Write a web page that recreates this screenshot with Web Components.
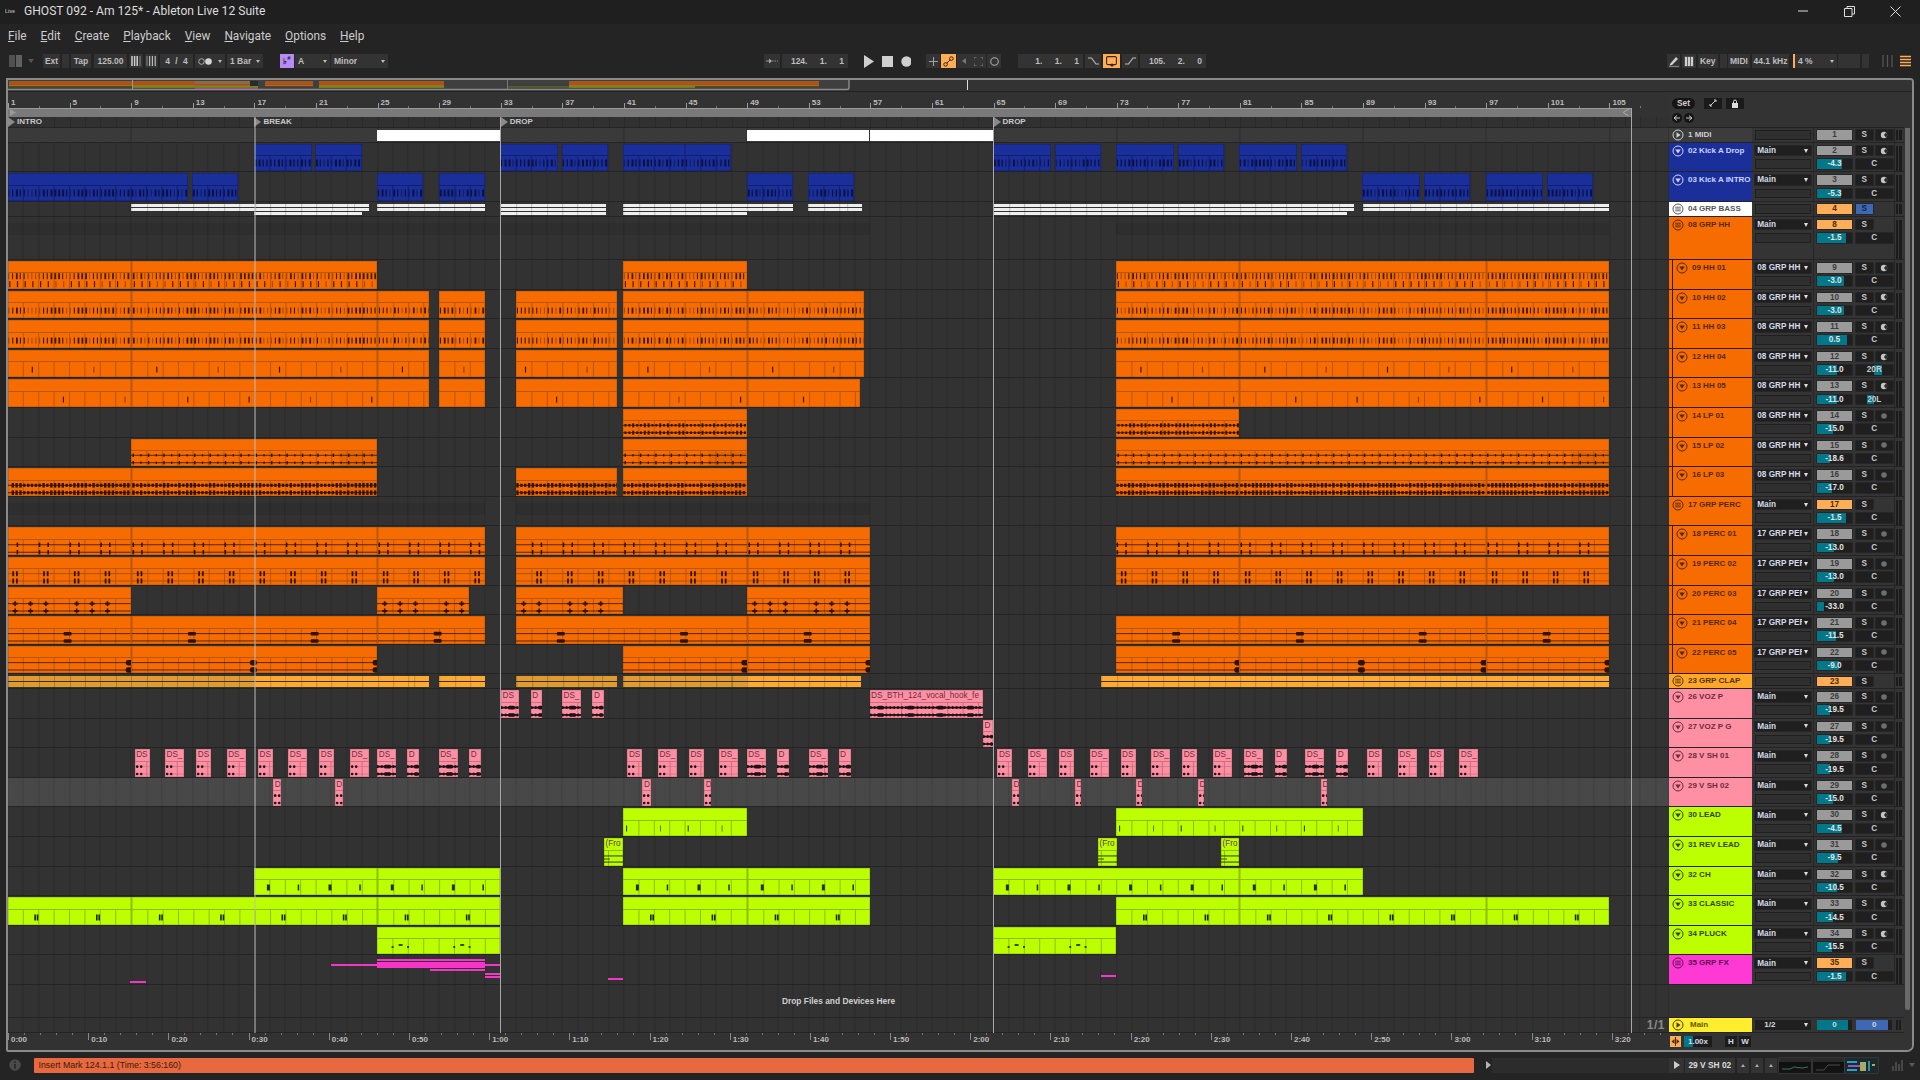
<!DOCTYPE html>
<html lang="en"><head><meta charset="utf-8"><title>Ableton Live</title>
<style>
html,body{margin:0;padding:0;background:#242424;overflow:hidden;width:1920px;height:1080px}
body{font-family:"Liberation Sans",Arial,sans-serif}
</style></head><body><live-app></live-app>
<script>
const BW=15.4, OFF=.6, b2x=b=>Math.max(0,(b-1)*BW-OFF);
const KC={b:{c:'#1b2f9a',g:'#121f70',t:'#0a1040'},o:{c:'#f76c00',g:'#b8560c',t:'#2e1400'},p:{c:'#ff8fa3',g:'#c9707f',t:'#1c1114'},l:{c:'#bcff00',g:'#8cbf00',t:'#1a2400'}};
const HC={b:['#1b2f9a','#ccd4ff'],o:['#f76c00','#52290a'],p:['#ff8fa3','#6b2c3c'],l:['#bcff00','#33440a'],w:['#ffffff','#555'],m:['#ff39d4','#5a1050'],c:['#ffa726','#53320a'],y:['#ffed2e','#6a5600'],n:['#3c3c3c','#cfcfcf']};
const R=(x,y,w,h,f,o=1,rx=0)=>`<rect x="${x.toFixed(1)}" y="${(y-h/2).toFixed(1)}" width="${w}" height="${h}" fill="${f}"${o<1?` opacity="${o}"`:''}${rx?` rx="${rx}"`:''}/>`;
const hash=n=>{const s=Math.sin(n*127.1+3.7)*43758.5;return s-Math.floor(s)};
function per(p,offs,x0,x1,cb){for(let k=Math.floor(x0/BW/p)-1;k*p*BW<x1+BW;k++)offs.forEach((o,i)=>{const x=(k*p+o)*BW-OFF;if(x>=x0&&x<x1-.5)cb(x-x0,k,i)});}
const PAT={
 kick:(a,b,t)=>{let s='';per(.25,[.05],a,b,(x,k)=>{const d=hash(k);s+=R(x,7,d>.6?2:1.3,7,t,d<.2?.55:.95)});return s},
 hh1:(a,b,t)=>{let s='';per(.25,[.05],a,b,(x,k)=>{const d=hash(k);s+=R(x,3.2,d>.7?1.8:1.1,6,t,d<.3?.4:.9)});per(.5,[.12],a,b,(x,k)=>{const d=hash(k+9);s+=R(x,11.2,1.2,6,t,d<.35?.4:.9)});return s},
 hh2:(a,b,t)=>{let s='';per(.25,[.06],a,b,(x,k)=>{const d=hash(k);s+=R(x,7.6,d>.75?1.8:1.1,6,t,d<.3?.38:.95)});return s},
 hh4:(a,b,t)=>{let s='';per(4,[1.58],a,b,(x,k)=>{s+=R(x,7.6,1.2,6,t,k%2?.5:.95)});return s},
 hh5:(a,b,t)=>{let s='';per(4,[3.6],a,b,(x,k)=>{s+=R(x,7.6,1.2,6,t,k%3==1?.5:.9)});return s},
 lp1:(a,b,t)=>{let s=R(0,4.3,b-a,.9,t,.9)+R(0,11.7,b-a,.9,t,.9);per(.25,[.1],a,b,(x,k)=>{const d=hash(k);s+=R(x,4.3,2,d>.5?4:2.6,t)+R(x,11.7,2,d>.5?4:2.6,t)});return s},
 lp2:(a,b,t)=>{let s=R(0,4.3,b-a,.9,t,.9)+R(0,11.7,b-a,.9,t,.9);per(.5,[.1],a,b,(x,k)=>{s+=R(x,4.3,1.4,k%2?2.2:3.4,t)+R(x,11.7,1.4,k%2?2.2:3.4,t)});if(b-a>100)s+=R(b-a-38,8,38,15,t,.08);return s},
 lp3:(a,b,t)=>{let s=R(0,4.3,b-a,1,t,.9)+R(0,11.7,b-a,1,t,.9);per(.25,[.02],a,b,(x,k)=>{const d=hash(k);s+=R(x,4.3,2.4,d>.5?4.6:3.2,t)+R(x,11.7,2.4,d>.5?4.6:3.2,t)});if(b-a>100)s+=R(b-a-38,8,38,15,t,.08);return s},
 pc1:(a,b,t)=>{let s=R(0,4.8,b-a,.8,t)+R(0,12.2,b-a,.8,t);per(2,[.03,.6],a,b,x=>{s+=R(x,4.8,1.6,4.4,t)+R(x,12.2,1.6,4.4,t)});return s},
 pc2:(a,b,t)=>{let s=R(0,4.7,b-a,.8,'#a04c05')+R(0,12,b-a,.8,'#a04c05');per(2,[.32,.56],a,b,x=>{s+=R(x,4.7,1.8,5,t)+R(x,12,1.8,5,t)});return s},
 pc3:(a,b,t)=>{let s=R(0,4.7,b-a,.8,t)+R(0,12,b-a,.8,t);per(8,[.47,1.47,2.47,4.47,5.47,6.47],a,b,x=>{[4.7,12].forEach(y=>{s+=R(x-2,y,5,2,t)+R(x-.3,y,1.6,5,t)})});return s},
 pc4:(a,b,t)=>{let s=R(0,4.7,b-a,.8,t)+R(0,12,b-a,.8,t);per(8,[3.65],a,b,x=>{[4.7,12].forEach(y=>{s+=R(x,y,8,3.6,t,1,1)})});return s},
 pc5:(a,b,t)=>{let s=R(0,4.7,b-a,.8,t)+R(0,12,b-a,.8,t);per(8,[7.68],a,b,x=>{[4.7,12].forEach(y=>{s+=R(x,y,7.2,5.5,t,1,2.4)})});return s},
 ld:(a,b,t)=>{let s='';per(4,[.2,2.4],a,b,(x,k,i)=>{s+=R(x,7.5,1,6,t,i?.6:.95)});return s},
 ch:(a,b,t)=>{let s='';per(2,[.84],a,b,(x,k)=>{s+=R(x,7.5,k%2?1.5:3,6,t,.95)});return s},
 cl:(a,b,t)=>{let s='';per(4,[1.75],a,b,x=>{s+=R(x,7.5,1.6,6,t)+R(x+2.4,7.5,1.6,6,t)});return s},
 pl:(a,b,t)=>{let s='';per(4,[.95,1.4,1.95],a,b,(x,k,i)=>{s+=R(x,i==1?6:8,i==1?4:2,1.6,t)});return s},
 ds:(a,b,t,g)=>{const W=b-a;let s=R(0,4.6,W,.7,g)+R(0,12,W,.7,g);[1,5].forEach(x=>{if(x<W){s+=R(x,4.6,2.4,2.6,t,1,1)+R(x,12,2.4,2.6,t,1,1)}});return s},
 dsd:(a,b,t)=>{const W=b-a;let s=R(0,4.6,W,1.8,t)+R(0,12,W,1.8,t);for(let x=7;x<W;x+=30){s+=R(x,4.6,Math.min(7,W-x),3.6,t,1,1.5)+R(x,12,Math.min(7,W-x),3.6,t,1,1.5)}for(let x=0;x<W-1;x+=3.9){s+=R(x,4.6,1.6,2.8,t)+R(x,12,1.6,2.8,t)}return s},
 fro:(a,b,t)=>R(0,5,b-a,.9,t)+R(0,11,b-a,.9,t)+R(0,8,6,2,t,.4)
};
const clipTpl=document.createElement('template');
clipTpl.innerHTML=`<style>
:host{display:flex;flex-direction:column;flex:none;height:100%;box-sizing:border-box;overflow:hidden;background:var(--c);box-shadow:inset 0 0 0 .5px var(--g)}
.head{height:12.5px;flex:none;box-sizing:border-box;border-bottom:1px solid var(--g);overflow:hidden;white-space:nowrap;font:8.2px/11.5px "Liberation Sans",Arial,sans-serif;color:#6b3040;padding-left:1.5px}
svg{display:block;flex:1;min-height:0;width:100%}
</style><div class="head"><slot></slot></div><svg></svg>`;
class LiveClip extends HTMLElement{
 constructor(){super();this.attachShadow({mode:'open'}).appendChild(clipTpl.content.cloneNode(true))}
 connectedCallback(){
  const {x0,x1,kind,pat,first}=this.info;const k=KC[kind];const W=x1-x0;
  this.style.cssText=`margin-left:${this.gap.toFixed(2)}px;width:${W.toFixed(2)}px;--c:${k.c};--g:${k.g};${first?'':`border-left:1px solid ${k.g};`}`;
  let s='';
  for(let b=Math.ceil(x0/BW);b*BW-OFF<x1;b++){const gx=b*BW-OFF-x0;if(gx>.5)s+=`<rect x="${gx.toFixed(1)}" y="0" width="1" height="16" fill="${k.g}"/>`}
  if(PAT[pat])s+=PAT[pat](x0,x1,k.t,k.g);
  const svg=this.shadowRoot.querySelector('svg');svg.setAttribute('viewBox',`0 0 ${W.toFixed(2)} 15.5`);svg.setAttribute('preserveAspectRatio','xMinYMin slice');svg.innerHTML=s;
 }
}
customElements.define('live-clip',LiveClip);
const SPL=[9,25,49,81,97];
function BC(kind,pat,ranges,label,noSplit){const out=[];ranges.forEach(([s,e])=>{const pts=[s];if(!noSplit&&kind!='b')SPL.forEach(p=>{if(p>s&&p<e)pts.push(p)});pts.push(e);for(let i=0;i<pts.length-1;i++)out.push({x0:b2x(pts[i]),x1:b2x(pts[i+1]),kind,pat,label,first:i==0})});return out}
function PX(kind,pat,pairs,label){return pairs.map(([a,b,p])=>({x0:a-8,x1:b-8,kind,pat:p||pat,label,first:true}))}
const mctx=document.createElement('canvas').getContext('2d');mctx.font='8.2px "Liberation Sans"';
const fitLabel=(txt,w)=>{let s=txt;while(s.length>1&&mctx.measureText(s).width>w-2.5)s=s.slice(0,-1);return s};
const row28=[];
[134.7,165,196.3,226.7,258,288.3,319.3,350].forEach((x,i)=>row28.push([x,x+(i%2?19:15),'ds']));
[377.3,407.3,438.7,469.3].forEach((x,i)=>row28.push([x,x+(i%2?12:19),'dsd']));
[627.5,658,689,719.3].forEach((x,i)=>row28.push([x,x+(i%2?19:15),'ds']));
[746.8,777,808.6,838.6].forEach((x,i)=>row28.push([x,x+(i%2?12:19),'dsd']));
for(let k=0;k<16;k++){const x=997.5+30.8*k;const d=k>=8&&k<12;row28.push([x,x+(d?(k%2?12:19):(k%2?19:15)),d?'dsd':'ds'])}
const S10=[[1,28.4],[29,32],[34,40.6],[41,56.6],[73,105]];
const T=(name,num,col,h,o={})=>({name,num,col,h,...o});
const LBL='DS_BTH_124_vocal_hook_fe';
const TRACKS=[
 T('1 MIDI','1','n',14.8,{icon:'play',fold:1,arm:'pie',lane:'midi',strips:[[b2x(25),b2x(33),1.6,10.6,'#fff'],[b2x(49),b2x(57)-.5,1.6,10.6,'#fff'],[b2x(57)+.5,b2x(65),1.6,10.6,'#fff']]}),
 T('02 Kick A Drop','2','b',29.6,{route:'Main',vol:'-4.3',fill:70,arm:'pie',clips:BC('b','kick',[[17,20.75],[21,24],[33,36.75],[37,40],[41,45],[45,48],[65,68.75],[69,72],[73,76.75],[77,80],[81,84.75],[85,88]])}),
 T('03 Kick A INTRO','3','b',29.6,{route:'Main',vol:'-5.3',fill:68,arm:'pie',clips:BC('b','kick',[[1,12.75],[13,16],[25,28],[29,32],[49,52],[53,56],[89,92.75],[93,96],[97,100.75],[101,104]])}),
 T('04 GRP BASS','4','w',14.8,{icon:'grp',fold:1,grp:1,sblue:1,strips:[[b2x(9),361,2,2.7,'#eee'],[b2x(9),361,6,2.7,'#eee'],[b2x(17),b2x(24),10,2.7,'#eee'],[b2x(25),b2x(32),2,2.7,'#eee'],[b2x(25),b2x(32),6,2.7,'#eee'],[b2x(33),b2x(39.9),2,2.7,'#eee'],[b2x(33),b2x(39.9),6,2.7,'#eee'],[b2x(33),b2x(39.9),10,2.7,'#eee'],[b2x(41),b2x(52),2,2.7,'#eee'],[b2x(41),b2x(52),6,2.7,'#eee'],[b2x(41),b2x(49),10,2.7,'#eee'],[b2x(53),b2x(56.5),2,2.7,'#eee'],[b2x(53),b2x(56.5),6,2.7,'#eee'],[b2x(65),b2x(88.45),2,2.7,'#eee'],[b2x(65),b2x(88.45),6,2.7,'#eee'],[b2x(65),b2x(88),10,2.7,'#eee'],[b2x(89),b2x(105),2,2.7,'#eee'],[b2x(89),b2x(105),6,2.7,'#eee']]}),
 T('08 GRP HH','8','o',43.2,{icon:'grp',grp:1,route:'Main',vol:'-1.5',fill:82,strips:[[0,b2x(57),6,12,'rgba(0,0,0,.07)'],[b2x(73),b2x(105),6,12,'rgba(0,0,0,.07)']]}),
 T('09 HH 01','9','o',29.6,{ind:1,route:'08 GRP HH',vol:'-3.0',fill:76,arm:'pie',clips:BC('o','hh1',[[1,25],[41,49],[73,105]])}),
 T('10 HH 02','10','o',29.6,{ind:1,route:'08 GRP HH',vol:'-3.0',fill:76,arm:'pie',clips:BC('o','hh2',S10)}),
 T('11 HH 03','11','o',29.6,{ind:1,route:'08 GRP HH',vol:'0.5',fill:85,arm:'pie',clips:BC('o','hh2',S10)}),
 T('12 HH 04','12','o',29.6,{ind:1,route:'08 GRP HH',vol:'-11.0',fill:56,pan:'20R',arm:'pie',clips:BC('o','hh4',S10)}),
 T('13 HH 05','13','o',29.6,{ind:1,route:'08 GRP HH',vol:'-11.0',fill:56,pan:'20L',arm:'pie',clips:BC('o','hh5',[[1,28.4],[29,32],[34,40.6],[41,56.4],[73,105]])}),
 T('14 LP 01','14','o',29.6,{ind:1,route:'08 GRP HH',vol:'-15.0',fill:45,arm:'dot',clips:BC('o','lp1',[[41,49],[73,81]])}),
 T('15 LP 02','15','o',29.6,{ind:1,route:'08 GRP HH',vol:'-18.6',fill:38,arm:'dot',clips:BC('o','lp2',[[9,25],[41,49],[73,105]],null,1)}),
 T('16 LP 03','16','o',29.6,{ind:1,route:'08 GRP HH',vol:'-17.0',fill:42,arm:'dot',clips:BC('o','lp3',[[1,25],[34,40.6],[41,49],[73,105]])}),
 T('17 GRP PERC','17','o',29.6,{icon:'grp',grp:1,route:'Main',vol:'-1.5',fill:82,strips:[[0,b2x(32),6,12,'rgba(0,0,0,.07)'],[b2x(34),b2x(57),6,12,'rgba(0,0,0,.07)']]}),
 T('18 PERC 01','18','o',29.6,{ind:1,route:'17 GRP PERC',vol:'-13.0',fill:50,arm:'dot',clips:BC('o','pc1',[[1,32],[34,57],[73,105]])}),
 T('19 PERC 02','19','o',29.6,{ind:1,route:'17 GRP PERC',vol:'-13.0',fill:50,arm:'dot',clips:BC('o','pc2',[[1,32],[34,57],[73,105]])}),
 T('20 PERC 03','20','o',29.6,{ind:1,route:'17 GRP PERC',vol:'-33.0',fill:20,arm:'dot',clips:BC('o','pc3',[[1,9],[25,31],[34,41],[49,57]])}),
 T('21 PERC 04','21','o',29.6,{ind:1,route:'17 GRP PERC',vol:'-11.5',fill:55,arm:'dot',clips:BC('o','pc4',[[1,32],[34,57],[73,105]])}),
 T('22 PERC 05','22','o',29.6,{ind:1,route:'17 GRP PERC',vol:'-9.0',fill:62,arm:'dot',clips:BC('o','pc5',[[1,25],[41,57],[73,105]])}),
 T('23 GRP CLAP','23','c',14.8,{icon:'grp',fold:1,grp:1,clapStrips:1}),
 T('26 VOZ P','26','p',29.6,{route:'Main',vol:'-19.5',fill:36,arm:'dot',clips:PX('p','dsd',[[501,518.6],[530.7,542.5],[562,581],[592.5,604],[869.6,983]],LBL)}),
 T('27 VOZ P G','27','p',29.6,{route:'Main',vol:'-19.5',fill:36,arm:'dot',clips:PX('p','dsd',[[983,993]],LBL)}),
 T('28 V SH 01','28','p',29.6,{route:'Main',vol:'-19.5',fill:36,arm:'dot',clips:PX('p','ds',row28,LBL)}),
 T('29 V SH 02','29','p',29.6,{sel:1,route:'Main',vol:'-15.0',fill:45,arm:'dot',clips:PX('p','ds',[[273.3,281],[334.7,342.7],[642.5,650.7],[704.3,711],[1012,1019],[1075,1081],[1136,1142],[1198,1204],[1321,1327]],LBL)}),
 T('30 LEAD','30','l',29.6,{route:'Main',vol:'-4.5',fill:72,arm:'pie',clips:BC('l','ld',[[41,49],[73,89]],null,1)}),
 T('31 REV LEAD','31','l',29.6,{route:'Main',vol:'-9.5',fill:60,arm:'dot',clips:PX('l','fro',[[604,623],[1098,1117],[1221,1239]],'(From')}),
 T('32 CH','32','l',29.6,{route:'Main',vol:'-10.5',fill:58,arm:'pie',clips:BC('l','ch',[[17,33],[41,57],[65,89]])}),
 T('33 CLASSIC','33','l',29.6,{route:'Main',vol:'-14.5',fill:46,arm:'pie',clips:BC('l','cl',[[1,33],[41,57],[73,105]])}),
 T('34 PLUCK','34','l',29.6,{route:'Main',vol:'-15.5',fill:44,arm:'pie',clips:BC('l','pl',[[25,33],[65,73]])}),
 T('35 GRP FX','35','m',29.6,{icon:'grp',grp:1,route:'Main',vol:'-1.5',fill:82,strips:[[322.6,492,9,2,'#f535c8'],[369,477,4,2,'#f535c8'],[369,477,7,2,'#f535c8'],[369,477,11,2,'#f535c8'],[422,477,14,2,'#f535c8'],[477,492,17.6,2,'#f535c8'],[477,492,20.6,2,'#f535c8'],[122,137.7,26,2,'#f535c8'],[600,615,22.6,1.6,'#f535c8'],[1093,1108,20,1.6,'#f535c8']]})
];
const gridBg=(c='#2a2a2a')=>`repeating-linear-gradient(90deg,${c} 0,${c} 1px,transparent 1px,transparent ${BW}px)`;
const iconSvg=(t,c)=>{const body=t=='grp'?`<path d="M3.2 4.2h5.6M3.2 6h5.6M3.2 7.8h5.6" stroke="${c}" stroke-width=".9"/>`:t=='play'?`<path d="M4.5 3.2 8.6 6 4.5 8.8z" fill="${c}"/>`:`<path d="M3.2 4.6h5.6L6 8.4z" fill="${c}"/>`;return `<svg width="12" height="12" viewBox="0 0 12 12" style="flex:none"><circle cx="6" cy="6" r="5" fill="none" stroke="${c}" stroke-width="1"/>${body}</svg>`};
const laneTpl=document.createElement('template');
laneTpl.innerHTML=`<style>
:host{display:flex;flex:none;width:1661px;box-sizing:border-box;height:100%;padding-top:1px;overflow:hidden;background-color:var(--lane,#323232);background-image:var(--lines);background-position-x:-${OFF}px}
:host(.strips){display:grid;grid-template-columns:1fr;grid-auto-rows:1px;padding-top:0;align-content:start}
</style><slot></slot>`;
class LiveLane extends HTMLElement{
 constructor(){super();this.attachShadow({mode:'open'}).appendChild(laneTpl.content.cloneNode(true))}
}
customElements.define('live-lane',LiveLane);
const trackTpl=document.createElement('template');
trackTpl.innerHTML=`<style>
:host{display:flex;flex:none;box-sizing:border-box;height:var(--h);border-bottom:1.4px solid #232323;font:bold 8.2px/9.6px "Liberation Sans",Arial,sans-serif;color:#d4d4d4}
.hd{flex:none;width:83px;height:100%;box-sizing:border-box;display:flex}
.in{flex:1;display:flex;align-items:flex-start;gap:4px;padding:2px 0 0 3px;box-sizing:border-box;font:bold 8px/12px "Liberation Sans",Arial,sans-serif;white-space:nowrap;overflow:hidden}
.fold .in{padding-top:1.2px}
.nest .in{margin-left:4px;box-shadow:0 0 0 1px #33190a}
.mix{flex:none;width:152px;height:100%;box-sizing:border-box;padding:3px 0 0 3.3px;background:linear-gradient(#262626,#262626) 61px 0/1px 100% no-repeat,linear-gradient(#262626,#262626) 142px 0/1px 100% no-repeat,#343434;display:grid;grid-template-columns:55.4px 6px 35.6px 3.7px 16.7px 3.3px 16.7px 3.3px 5.7px;grid-template-rows:9.6px 9.6px minmax(0,1fr);row-gap:3.6px;overflow:hidden}
.fold .mix{padding-top:2.4px}
.box{box-sizing:border-box;height:9.6px;background:#1f1f1f;box-shadow:0 0 0 .5px #181818;display:flex;align-items:center;position:relative;overflow:hidden;white-space:nowrap}
.r{grid-column:1;padding-left:2px;color:#d6daea}
.r b{font-weight:bold;line-height:9.4px}
.r i{position:absolute;right:0;top:0;bottom:0;width:9px;background:#1f1f1f;display:flex;align-items:center;justify-content:center}
.r i::after{content:"";width:0;height:0;border-left:2.8px solid transparent;border-right:2.8px solid transparent;border-top:4px solid #ddd}
.e{background:#2f2f2f;box-shadow:inset 0 0 0 .7px #1b1b1b}
.num{grid-column:3;justify-content:center;background:#9a9a9a;color:#3c3c3c}
.num.g{background:#ffad56;color:#4a2c00}
.s{grid-column:5;justify-content:center;color:#c8c8c8}
.s.blue{background:#3f68b4;color:#12213f}
.a{grid-column:7;justify-content:center}
.v{grid-column:3;justify-content:center;color:#e2e2e2}
.v u,.p u{position:absolute;top:0;bottom:0;background:#00788a}
.v span,.p span{position:relative;font-size:8.2px;line-height:9.4px}
.p{grid-column:5/8;justify-content:center;color:#ccc}
.m{grid-column:9;grid-row:1/-1;background:linear-gradient(90deg,#1c1c1c 0 2.4px,transparent 2.4px 3.3px,#1c1c1c 3.3px)}
</style><div class="wrap" style="display:contents"><live-lane></live-lane><div class="hd"><div class="in"></div></div><div class="mix"></div></div>`;
class LiveTrack extends HTMLElement{
 constructor(){super();this.attachShadow({mode:'open'}).appendChild(trackTpl.content.cloneNode(true))}
 connectedCallback(){
  const t=this.data,r=this.shadowRoot;
  this.style.setProperty('--h',t.h+'px');
  if(t.fold)r.querySelector('.wrap').className='wrap fold';
  const lane=r.querySelector('live-lane');
  if(t.sel)lane.style.cssText=`--lane:#484848;--lines:${gridBg('#3e3e3e')}`;
  else if(t.lane=='midi')lane.style.cssText=`--lane:#3a3a3a;--lines:repeating-linear-gradient(90deg,#2c2c2c 0,#2c2c2c 1px,transparent 1px,transparent ${BW*8}px)`;
  else lane.style.cssText=`--lines:${gridBg()}`;
  if(t.clips){let prev=0;t.clips.forEach(c=>{const e=document.createElement('live-clip');e.info=c;e.gap=c.x0-prev;prev=c.x1;if(c.label)e.textContent=fitLabel(c.label,c.x1-c.x0);lane.appendChild(e)})}
  const strip=(a,b,y,h,col,img)=>{if(h<.5)return;const d=document.createElement('div');d.style.cssText=`grid-column:1;grid-row:${Math.round(y)+1}/span ${Math.max(1,Math.round(h))};margin-left:${a}px;width:${(b-a).toFixed(1)}px;background:${col};${img||''}`;lane.appendChild(d)};
  if(t.strips){lane.classList.add('strips');t.strips.forEach(s=>strip(s[0],s[1],s[2],s[3],s[4],s[4]=='#eee'?`background-image:${gridBg('#bbb')};background-position-x:${-(s[0]%BW)}px;`:''))}
  if(t.clapStrips){lane.classList.add('strips');[[1,17,1],[17,28.4,0],[29,32,0],[34,40.6,1],[41,49,1],[49,56.4,0],[72,105,0]].forEach(([a,b,dim])=>{const x=b2x(a),c=dim?'#e09a2e':'#ffa92e',l=dim?'#b07a22':'#d08a24';strip(x,b2x(b),2,5,c,`background-image:${gridBg(l)};background-position-x:${-(x%BW)}px;`);strip(x,b2x(b),8,5,c,`background-image:${gridBg(l)};background-position-x:${-(x%BW)}px;`)})}
  const [bg,fg]=HC[t.col];
  const hd=r.querySelector('.hd'),inn=r.querySelector('.in');
  hd.style.background=bg;if(t.ind)hd.classList.add('nest');
  inn.style.background=bg;inn.style.color=fg;
  inn.innerHTML=iconSvg(t.icon||'tri',fg)+`<span>${t.name}</span>`;
  const box=(cls,html)=>`<div class="box ${cls}">${html}</div>`;
  let m='';
  m+=t.route?box('r',`<b>${t.route}</b><i></i>`):box('e','').replace('box e','box e" style="grid-column:1');
  m+=box('num'+(t.grp?' g':''),t.num);
  m+=box('s'+(t.sblue?' blue':''),'S');
  if(t.arm)m+=box('a',t.arm=='pie'?`<svg width="8" height="8" viewBox="0 0 8 8"><circle cx="4" cy="4" r="3.2" fill="#c4c4c4"/><path d="M4 4V.8A3.2 3.2 0 0 1 7 5z" fill="#2a2a2a" transform="rotate(35 4 4)"/></svg>`:`<svg width="8" height="8" viewBox="0 0 8 8"><circle cx="4" cy="4" r="2.8" fill="#6e6e6e"/></svg>`);
  if(!t.fold){
   m+=`<div class="box e" style="grid-column:1;grid-row:2"></div>`;
   m+=`<div class="box v" style="grid-row:2"><u style="left:0;width:${t.fill}%"></u><span>${t.vol}</span></div>`;
   const pf=t.pan=='20R'?'left:50%;width:21%':t.pan=='20L'?'left:29%;width:21%':'';
   m+=`<div class="box p" style="grid-row:2">${pf?`<u style="${pf}"></u>`:''}<span>${t.pan||'C'}</span></div>`;
  }
  m+=`<div class="m"${t.fold?' style="grid-row:1"':''}></div>`;
  r.querySelector('.mix').innerHTML=m;
 }
}
customElements.define('live-track',LiveTrack);

const tbTpl=document.createElement('template');
tbTpl.innerHTML=`<style>:host{display:flex;align-items:center;flex:none;height:24px;box-sizing:border-box;padding-bottom:1.5px;background:#1f1f1f;color:#ddd;font:12.1px "Roboto","Liberation Sans",sans-serif}
.logo{margin-left:5px;width:10px;height:8px;font:bold 5px/8px "Liberation Sans",sans-serif;color:#aaa;overflow:hidden}
.t{margin-left:9px;flex:1;white-space:nowrap}
.w{flex:none;width:46px;height:22px;display:flex;align-items:center;justify-content:center}svg{display:block}</style>
<span class="logo">Live</span><span class="t"><slot></slot></span>
<span class="w"><svg width="10" height="10"><path d="M0 5h10" stroke="#ddd"/></svg></span>
<span class="w"><svg width="11" height="11"><path d="M.5 2.5h7.5v8H.5zM3 2.5V.5h7.5V8H8" fill="none" stroke="#ddd"/></svg></span>
<span class="w" style="margin-right:2px"><svg width="11" height="11"><path d="M.5.5l10 10M10.5.5l-10 10" stroke="#ddd"/></svg></span>`;
class LiveTitlebar extends HTMLElement{constructor(){super();this.attachShadow({mode:'open'}).appendChild(tbTpl.content.cloneNode(true))}}
customElements.define('live-titlebar',LiveTitlebar);

const mbTpl=document.createElement('template');
mbTpl.innerHTML=`<style>:host{display:flex;align-items:center;gap:14px;flex:none;height:26px;box-sizing:border-box;padding:0 0 2px 8px;background:#242424;color:#ccc;font:11.85px "Roboto","Liberation Sans",sans-serif}
u{text-underline-offset:1px}</style>`+['File','Edit','Create','Playback','View','Navigate','Options','Help'].map(s=>`<span><u>${s[0]}</u>${s.slice(1)}</span>`).join('');
class LiveMenubar extends HTMLElement{constructor(){super();this.attachShadow({mode:'open'}).appendChild(mbTpl.content.cloneNode(true))}}
customElements.define('live-menubar',LiveMenubar);

const I={
 two:`<svg width="13" height="12"><rect width="6" height="12" fill="#505050"/><rect x="7" width="6" height="12" fill="#606060"/></svg>`,
 dn:`<svg width="6" height="4"><path d="M0 0h6L3 4z" fill="#555"/></svg>`,
 b1:`<svg width="11" height="10"><path d="M1 0v10M3.6 0v10M6.2 0v10" stroke="#cfcfcf" stroke-width="1.5"/><path d="M9 0v10" stroke="#888"/></svg>`,
 b2:`<svg width="11" height="10"><path d="M1 0v10" stroke="#888"/><path d="M3.6 0v10M6.4 0v10M9.2 0v10" stroke="#bbb" stroke-width="1.2"/></svg>`,
 fol:`<svg width="12" height="8"><path d="M0 4h3" stroke="#999"/><path d="M3 1.5 6 4 3 6.5z" fill="#aaa"/><path d="M6 4h6" stroke="#888" stroke-dasharray="1.5 1"/></svg>`,
 play:`<svg width="10" height="13"><path d="M0 0 10 6.5 0 13z" fill="#cfcfcf"/></svg>`,
 stop:`<svg width="11" height="11"><rect width="11" height="11" fill="#cfcfcf"/></svg>`,
 rec:`<svg width="11" height="11"><circle cx="5.5" cy="5.5" r="5.2" fill="#cfcfcf"/></svg>`,
 plus:`<svg width="9" height="9"><path d="M4.5 0v9M0 4.5h9" stroke="#a0a0a0" stroke-width="1.1"/></svg>`,
 auto:`<svg width="11" height="11"><circle cx="2.6" cy="8.4" r="1.8" fill="none" stroke="#3a2406"/><circle cx="8.4" cy="2.6" r="1.8" fill="none" stroke="#3a2406"/><path d="M3.8 7.2 7.2 3.8" stroke="#3a2406"/></svg>`,
 back:`<svg width="8" height="8"><path d="M6 1 2 4l4 3z" fill="#777"/></svg>`,
 cap:`<svg width="9" height="9"><path d="M0 2.5V0h2.5M6.5 0H9v2.5M9 6.5V9H6.5M2.5 9H0V6.5" fill="none" stroke="#7a7a7a"/></svg>`,
 ring:`<svg width="9" height="9"><circle cx="4.5" cy="4.5" r="3.8" fill="none" stroke="#aaa" stroke-width="1.1"/></svg>`,
 pin:`<svg width="11" height="8"><path d="M0 1h3.5L8 7h3" fill="none" stroke="#bdbdbd" stroke-width="1.1"/></svg>`,
 pout:`<svg width="11" height="8"><path d="M0 7h3.5L8 1h3" fill="none" stroke="#bdbdbd" stroke-width="1.1"/></svg>`,
 loop:`<svg width="11" height="11"><rect x=".6" y=".6" width="9.8" height="8" rx="1.4" fill="none" stroke="#3a2406" stroke-width="1.1"/><circle cx="6" cy="9" r="1.6" fill="#3a2406"/></svg>`,
 pen:`<svg width="10" height="11"><path d="M1 8 7 1l2 2-6 6-2.400.5z" fill="#cfcfcf"/><path d="M0 10.400h10" stroke="#888"/></svg>`,
 keys:`<svg width="10" height="11"><path d="M.5.500h9v10h-9zM3.500.5v10M6.500.5v10" fill="#cfcfcf" stroke="#333" stroke-width=".7"/></svg>`,
 lines:`<svg width="11" height="12"><path d="M1 0v12M5.500 0v12M10 0v12" stroke="#555" stroke-width="1.300"/></svg>`,
 ham:`<svg width="11" height="12"><path d="M0 1.500h11M0 4.500h11M0 7.500h11M0 10.500h11" stroke="#ffad56" stroke-width="1.400"/></svg>`,
 oo:`<svg width="14" height="7"><circle cx="3.500" cy="3.500" r="2.800" fill="none" stroke="#bbb" stroke-width=".9"/><circle cx="10.500" cy="3.500" r="3.300" fill="#d4d4d4"/></svg>`
};
const dd=t=>`<span style="flex:1;display:flex;align-items:center">${t}</span><i style="width:0;height:0;border-left:2px solid transparent;border-right:2px solid transparent;border-top:3px solid #bbb;flex:none"></i>`;
const TB=[
 [9,22,I.two,'n'],[28,34,I.dn,'n'],[43,60,'Ext'],[62,69,''],[71,91,'Tap'],[94,127,'125.00'],[129,143,I.b1],[145,158,I.b2],[160,193,'4 / 4','sig'],[195,225,dd(I.oo),'dd'],[227,263,dd('1 Bar'),'dd'],
 [280,294,'<span style="color:#222;font-size:8px">♭<sup style="font-size:6px;line-height:0">#</sup></span>','pur'],[295,330,dd('A'),'dd'],[331,388,dd('Minor'),'dd'],
 [764,780,I.fol],[782,848,'124. 1. 1','pos'],[864,874,I.play,'n'],[882,893,I.stop,'n'],[901,911,I.rec,'n'],[926,940,I.plus],[941,955.5,I.auto,'or'],[957,971,I.back],[971,986,I.cap],[987,1001,I.ring],
 [1018,1083,'1. 1. 1','pos'],[1085,1101,I.pin],[1103,1120,I.loop,'or'],[1122,1138,I.pout],[1140,1206,'105. 2. 0','pos'],
 [1667,1680,I.pen],[1682,1696,I.keys],[1697.5,1718,'Key'],[1720,1727,''],[1728,1750,'MIDI'],[1752,1789,'44.1 kHz'],[1793,1794.5,'','line'],[1795,1837,dd('4 %'),'dd'],[1838,1860,''],[1862,1869,''],[1882,1893,I.lines,'n'],[1899.6,1911,I.ham,'n']
];
const tlTpl=document.createElement('template');
tlTpl.innerHTML=`<style>:host{display:flex;align-items:center;flex:none;height:28px;box-sizing:border-box;padding-bottom:6px;background:#242424;font:bold 8.5px "Liberation Sans",Arial,sans-serif;color:#bdbdbd}
.i{flex:none;height:14px;box-sizing:border-box;background:#333;display:flex;align-items:center;justify-content:center;white-space:pre;overflow:hidden}
.n{background:none}.or{background:#ffad56}.pur{background:#b78cf6}.line{background:#ffad56}
.dd{justify-content:flex-start;padding:0 3px 0 3px;gap:2px}.pos{justify-content:flex-end;padding-right:4px;word-spacing:10px}.sig{word-spacing:3px}
svg{display:block}</style><slot></slot>`;
class LiveToolbar extends HTMLElement{constructor(){super();const r=this.attachShadow({mode:'open'});r.appendChild(tlTpl.content.cloneNode(true));let p=0;TB.forEach(([a,b,h,c])=>{const d=document.createElement('div');d.className='i '+(c||'');d.style.cssText=`margin-left:${a-p}px;width:${b-a}px`;d.innerHTML=h;p=b;r.appendChild(d)})}}
customElements.define('live-toolbar',LiveToolbar);

const ovTpl=document.createElement('template');
ovTpl.innerHTML=`<style>:host{display:block;flex:none;height:12px;box-sizing:border-box;background:#333;border-bottom:1.500px solid #222}svg{display:block}</style>
<svg width="1904" height="11" viewBox="8 80 1904 11">
<rect x="8" y="80" width="841" height="10" fill="#3f3f3f"/>
<rect x="9" y="81" width="186" height="3.400" fill="#a5561a"/><rect x="195" y="81" width="55" height="3.400" fill="#8f6a48"/><rect x="250" y="81" width="8" height="5" fill="#2a2a2a"/><rect x="265" y="81" width="48" height="3.400" fill="#a5561a"/><rect x="319" y="81" width="125" height="3.400" fill="#a5561a"/><rect x="569" y="81" width="250" height="3.400" fill="#a5561a"/>
<rect x="9" y="84.400" width="186" height="1.800" fill="#c46012"/><rect x="195" y="84.400" width="55" height="1.800" fill="#b25a18"/><rect x="265" y="84.400" width="48" height="1.800" fill="#c46012"/><rect x="319" y="84.400" width="125" height="1.800" fill="#c46012"/><rect x="569" y="84.400" width="250" height="1.800" fill="#c46012"/>
<rect x="9" y="86.200" width="123" height="1.500" fill="#4a4f20"/><rect x="132" y="86.200" width="126" height="1.500" fill="#7f9a12"/><rect x="319" y="86.200" width="125" height="1.500" fill="#7f9a12"/><rect x="507" y="86.200" width="62" height="1.500" fill="#5a6428"/><rect x="569" y="86.200" width="126" height="1.500" fill="#7f9a12"/><rect x="695" y="86.200" width="124" height="1.500" fill="#4a4f20"/>
<rect x="195" y="88" width="63" height="1.500" fill="#b0309a"/>
<rect x="132" y="80" width="1" height="10" fill="#999"/><rect x="507" y="80" width="1" height="10" fill="#777"/>
<path d="M849 80v7.500q0 2-2 2H8" fill="none" stroke="#8a8a8a" stroke-width="1.400"/>
<rect x="967" y="80" width="1" height="10" fill="#ddd"/>
</svg>`;
class LiveOverview extends HTMLElement{constructor(){super();this.attachShadow({mode:'open'}).appendChild(ovTpl.content.cloneNode(true))}}
customElements.define('live-overview',LiveOverview);

const rlTpl=document.createElement('template');
rlTpl.innerHTML=`<style>:host{display:flex;flex:none;height:36px;font:bold 8px/10px "Liberation Sans",Arial,sans-serif;color:#bbb;background:#323232;border-bottom:1px solid #222;box-sizing:border-box}
.l{flex:none;width:1661px;display:flex;flex-direction:column}
.nums{display:flex;flex:none;height:16px;overflow:hidden}
.nums span{flex:none;width:${BW*4}px;height:16px;box-sizing:border-box;padding:6px 0 0 3px;background:linear-gradient(#9a9a9a,#9a9a9a) 0 100%/1px 5px no-repeat,linear-gradient(#777,#777) ${BW*2}px 100%/1px 2px no-repeat}
.sc{flex:none;height:8.700px;display:flex;background:#323232}
.sc b{flex:none;width:1623px;box-sizing:border-box;background:#7a7a7a;border-top:1px solid #9a9a9a;display:flex;align-items:center;justify-content:space-between;padding:0 2px}
.loc{flex:1;display:flex;background-color:#313131;background-image:${gridBg()};border-bottom:1px solid #252525;box-sizing:border-box}
.loc div{flex:none;display:flex;align-items:center;gap:2px;color:#c9c9c9}
.hdr{flex:1;display:flex;flex-direction:column;gap:4px;padding:6px 0 0 3px;background:#333;box-sizing:border-box}
.a{display:flex;align-items:center}
.set{width:23px;height:10.700px;border-radius:6px;background:#151515;color:#ccc;display:flex;align-items:center;justify-content:center;font-size:8.400px}
.sq{width:18px;height:10.700px;background:#1a1a1a;display:flex;align-items:center;justify-content:center}
.dot{width:10px;height:10px;border-radius:50%;background:#141414;display:flex;align-items:center;justify-content:center}
svg{display:block}</style>
<div class="l"><div class="nums"></div><div class="sc"><b><svg width="6" height="7"><path d="M0 0 6 3.500 0 7z" fill="#9a9a9a"/></svg><svg width="6" height="7"><path d="M6 0 0 3.500 6 7" fill="none" stroke="#aaa"/></svg></b></div>
<div class="loc"></div></div>
<div class="hdr"><div class="a" style="gap:9px"><span class="set">Set</span><span style="display:flex;gap:3.700px"><span class="sq"><svg width="8" height="8"><path d="M1 7 7 1M5 1h2v2M1 5v2h2" stroke="#ccc" fill="none"/></svg></span><span class="sq"><svg width="8" height="9"><rect x="1" y="4" width="6" height="5" fill="#ddd"/><path d="M2.500 4V2.500a1.500 1.500 0 0 1 3 0V4" fill="none" stroke="#ddd"/></svg></span></span></div>
<div class="a" style="gap:2px"><span class="dot"><svg width="6" height="6"><path d="M0 3h6M0 3 3 0.500M0 3 3 5.500" stroke="#ccc"/></svg></span><span class="dot"><svg width="6" height="6"><path d="M0 3h6M6 3 3 .5M6 3 3 5.500" stroke="#ccc"/></svg></span></div></div>`;
class LiveRuler extends HTMLElement{constructor(){super();const r=this.attachShadow({mode:'open'});r.appendChild(rlTpl.content.cloneNode(true));
 const n=r.querySelector('.nums');for(let b=1;b<=105;b+=4){const s=document.createElement('span');s.textContent=b;n.appendChild(s)}
 const l=r.querySelector('.loc');[['INTRO',16],['BREAK',16],['DROP',32],['DROP',40]].forEach(([t,w])=>{const d=document.createElement('div');d.style.width=w*BW+'px';d.innerHTML=`<svg width="7" height="10"><path d="M0 0 7 5 0 10z" fill="#8a8a8a"/></svg><span>${t}</span>`;l.appendChild(d)})}}
customElements.define('live-ruler',LiveRuler);

const setTpl=document.createElement('template');
setTpl.innerHTML=`<style>:host{display:flex;flex-direction:column;flex:none;width:1908px;height:974px;box-sizing:border-box;margin-left:6px;border:2px solid #8a8a8a;border-radius:0 4px 7px 2px;background:#2c2c2c;overflow:hidden}
.wrap{flex:1;display:flex;position:relative;min-height:0}
.rows{flex:none;width:1896px;display:flex;flex-direction:column}
.sb{flex:none;width:8px;padding-top:36px;box-sizing:border-box;background:#333}
.sb i{display:block;margin-left:1px;width:5px;height:882px;border-radius:0 0 3px 3px;background:#6a6a6a}
.drop{flex:none;height:33.200px;display:flex;border-bottom:1.400px solid #232323;box-sizing:border-box;font:bold 8.400px "Liberation Sans",Arial,sans-serif}
.drop .la{flex:none;width:1661px;display:flex;align-items:center;justify-content:center;background-color:#323232;background-image:${gridBg()};background-position-x:-${OFF}px;color:#cfcfcf}
.drop .ri{flex:1;background:#343434}
.ovl{position:absolute;width:1px;pointer-events:none}
</style><live-overview></live-overview><div class="wrap"><div class="rows"><live-ruler></live-ruler><div class="tk" style="display:contents"></div>
<div class="drop"><div class="la">Drop Files and Devices Here</div><div class="ri"></div></div>
<live-mainrow></live-mainrow><live-timeline></live-timeline></div><div class="sb"><i></i></div>
<div class="ovl" style="left:${b2x(17)}px;top:25px;height:916px;width:2px;background:rgba(190,190,190,.5)"></div>
<div class="ovl" style="left:${b2x(33)}px;top:25px;height:916px;background:#a8a8a8"></div>
<div class="ovl" style="left:${b2x(65)}px;top:25px;height:916px;background:#a8a8a8"></div>
<div class="ovl" style="left:1623px;top:16px;height:925px;background:#a8a8a8"></div></div>`;
class LiveSet extends HTMLElement{constructor(){super();const r=this.attachShadow({mode:'open'});r.appendChild(setTpl.content.cloneNode(true));
 const tk=r.querySelector('.tk');TRACKS.forEach(t=>{const e=document.createElement('live-track');e.data=t;tk.appendChild(e)})}}
customElements.define('live-set',LiveSet);

const mrTpl=document.createElement('template');
mrTpl.innerHTML=`<style>:host{display:flex;flex:none;height:14.800px;box-sizing:border-box;border-bottom:1.400px solid #232323;font:bold 8px/9.600px "Liberation Sans",Arial,sans-serif;color:#d4d4d4}
.la{flex:none;width:1661px;display:flex;align-items:center;justify-content:flex-end;box-sizing:border-box;padding-right:4px;background-color:#323232;background-image:${gridBg()};background-position-x:-${OFF}px;color:#8a8a8a;font:bold 12px "Liberation Sans",sans-serif;letter-spacing:.5px}
.hd{flex:none;width:83px;background:#ffed2e;color:#6a5600;display:flex;align-items:center;gap:6px;padding-left:3px;box-sizing:border-box}
.mix{flex:1;background:#343434;display:flex;align-items:center;padding-left:3.300px}
.box{height:9.600px;background:#1f1f1f;display:flex;align-items:center;position:relative;overflow:hidden;flex:none;box-sizing:border-box}
u{position:absolute;top:0;bottom:0;left:0}span{position:relative}</style>
<div class="la">1/1</div><div class="hd"></div>
<div class="mix"><div class="box" style="width:55.400px;justify-content:space-between;padding:0 3px 0 9px;color:#ddd"><span>1/2</span><i style="width:0;height:0;border-left:2.800px solid transparent;border-right:2.800px solid transparent;border-top:4px solid #ddd"></i></div>
<div class="box" style="width:35.600px;margin-left:6px;justify-content:center"><u style="width:88%;background:#00788a"></u><span>0</span></div>
<div class="box" style="width:36px;margin-left:4px;justify-content:center"><u style="width:88%;background:#3f68b4"></u><span>0</span></div>
<div style="width:5.700px;height:9.600px;margin-left:3.300px;background:linear-gradient(90deg,#1c1c1c 0 2.400px,transparent 2.400px 3.300px,#1c1c1c 3.300px)"></div></div>`;
class LiveMainrow extends HTMLElement{constructor(){super();const r=this.attachShadow({mode:'open'});r.appendChild(mrTpl.content.cloneNode(true));r.querySelector('.hd').innerHTML=iconSvg('play','#4a3e00')+'<span>Main</span>'}}
customElements.define('live-mainrow',LiveMainrow);

const tmTpl=document.createElement('template');
tmTpl.innerHTML=`<style>:host{display:flex;flex:none;height:17.300px;background:#323232;font:bold 8px/10px "Liberation Sans",Arial,sans-serif;color:#bbb}
.l{flex:none;width:1661px;display:flex;overflow:hidden}
.l span{flex:none;width:80.200px;box-sizing:border-box;padding:2px 0 0 3px;white-space:nowrap;background:linear-gradient(#888,#888) 0 0/1px 7px no-repeat,linear-gradient(#777,#777) 16px 0/1px 2px no-repeat,linear-gradient(#777,#777) 32px 0/1px 2px no-repeat,linear-gradient(#777,#777) 48px 0/1px 2px no-repeat,linear-gradient(#777,#777) 64px 0/1px 2px no-repeat}
.r{flex:1;display:flex;align-items:center;padding-left:1px;background:#333}
.b{height:10.500px;flex:none;display:flex;align-items:center;justify-content:center;background:#1c1c1c;position:relative;overflow:hidden;color:#d6daea}
u{position:absolute;left:0;top:0;bottom:0;background:#00788a}span.x{position:relative}svg{display:block}</style>
<div class="l"></div><div class="r"><div class="b" style="width:11px;background:#ffad56"><svg width="9" height="9"><path d="M4.500 0v9" stroke="#4a2c00"/><path d="M3.500 2 .5 4.500l3 2.500zM5.500 2l3 2.500-3 2.500z" fill="#4a2c00"/></svg></div><div class="b" style="width:28px;margin-left:3px"><u style="width:33%"></u><span class="x">1.00x</span></div><div class="b" style="width:12px;margin-left:13px">H</div><div class="b" style="width:12px;margin-left:2px">W</div></div>`;
class LiveTimeline extends HTMLElement{constructor(){super();const r=this.attachShadow({mode:'open'});r.appendChild(tmTpl.content.cloneNode(true));const l=r.querySelector('.l');for(let t=0;t<=200;t+=10){const s=document.createElement('span');s.textContent=Math.floor(t/60)+':'+String(t%60).padStart(2,'0');l.appendChild(s)}}}
customElements.define('live-timeline',LiveTimeline);

const stTpl=document.createElement('template');
stTpl.innerHTML=`<style>:host{display:flex;align-items:flex-start;flex:none;height:28px;box-sizing:border-box;padding-top:5.700px;background:#242424;font:8.800px/15px "Liberation Sans",Arial,sans-serif}
.m{flex:none;width:1440.500px;height:15px;margin-left:12.500px;background:#e8693f;color:#3a1a0a;padding-left:5px;box-sizing:border-box;border-radius:1px}
.b{flex:none;height:15px;display:flex;align-items:center;justify-content:center;background:#333;color:#ddd;box-sizing:border-box}
svg{display:block}.i{margin-left:9px;width:12px;height:15px;display:flex;align-items:center}
.th{flex:none;height:15px;background:linear-gradient(180deg,#2a2a2a 25%,#0f0f0f 25%,#141414);box-shadow:0 0 0 .5px #444}</style>
<span class="i"><svg width="12" height="12"><circle cx="6" cy="6" r="5.800" fill="#4a4a4a"/><rect x="5.200" y="2.400" width="1.600" height="1.600" fill="#242424"/><rect x="5.200" y="5" width="1.600" height="4.600" fill="#242424"/></svg></span>
<div class="m">Insert Mark 124.1.1 (Time: 3:56:160)</div>
<span style="margin-left:12px;width:6px;height:15px;display:flex;align-items:center"><svg width="5" height="8"><path d="M0 0 5 4 0 8z" fill="#b5b5b5"/></svg></span>
<div class="b" style="width:177px;margin-left:0;background:#2c2c2c"></div>
<div class="b" style="width:15px"><svg width="6" height="8"><path d="M0 0 6 4 0 8z" fill="#ccc"/></svg></div>
<div class="b" style="width:49.700px;margin-left:1px;font-weight:bold;font-size:8.400px">29 V SH 02</div>
<div class="b" style="width:12.500px;margin-left:2px"><svg width="4" height="3"><path d="M0 3h4L2 0z" fill="#aaa"/></svg></div>
<div class="b" style="width:12.500px;margin-left:1.500px"><svg width="4" height="3"><path d="M0 3h4L2 0z" fill="#aaa"/></svg></div>
<div class="b" style="width:12.500px;margin-left:1.500px"><svg width="4" height="3"><path d="M0 3h4L2 0z" fill="#aaa"/></svg></div>
<div class="th" style="width:32px;margin-left:1.500px"><svg width="32" height="15"><path d="M3 11h8l4-2 8 1 6-1" fill="none" stroke="#3f6f5a"/></svg></div><div class="th" style="width:31px;margin-left:2px"><svg width="31" height="15"><path d="M3 12h8l4-5h12" fill="none" stroke="#4a4a4a"/></svg></div>
<div class="th" style="width:33px;margin-left:1px;background:#1c2a30"><svg width="33" height="15"><rect x="2" y="3" width="10" height="2" fill="#2f9fc0"/><rect x="3" y="7" width="12" height="2" fill="#8a5ac0"/><rect x="2" y="11" width="10" height="2" fill="#2f9fc0"/><rect x="15" y="4" width="6" height="9" fill="#a8a868"/><rect x="23" y="3" width="2" height="10" fill="#2a8f9f"/><rect x="27" y="6" width="3" height="2" fill="#c8a040"/></svg></div>
<span style="margin-left:14px;display:flex;align-items:center;height:15px;gap:5px"><svg width="12" height="11"><path d="M1 6v5M4 2v9M7 4v7M10 0v11" stroke="#5a5a5a" stroke-width="1.300"/></svg><svg width="6" height="4"><path d="M0 0h6L3 4z" fill="#5a5a5a"/></svg></span>`;
class LiveStatusbar extends HTMLElement{constructor(){super();this.attachShadow({mode:'open'}).appendChild(stTpl.content.cloneNode(true))}}
customElements.define('live-statusbar',LiveStatusbar);

const appTpl=document.createElement('template');
appTpl.innerHTML=`<style>:host{display:flex;flex-direction:column;width:1920px;height:1080px;overflow:hidden}</style>
<live-titlebar>GHOST 092 - Am 125* - Ableton Live 12 Suite</live-titlebar><live-menubar></live-menubar><live-toolbar></live-toolbar><live-set></live-set><live-statusbar></live-statusbar>`;
class LiveApp extends HTMLElement{constructor(){super();this.attachShadow({mode:'open'}).appendChild(appTpl.content.cloneNode(true))}}
customElements.define('live-app',LiveApp);
</script></body></html>
